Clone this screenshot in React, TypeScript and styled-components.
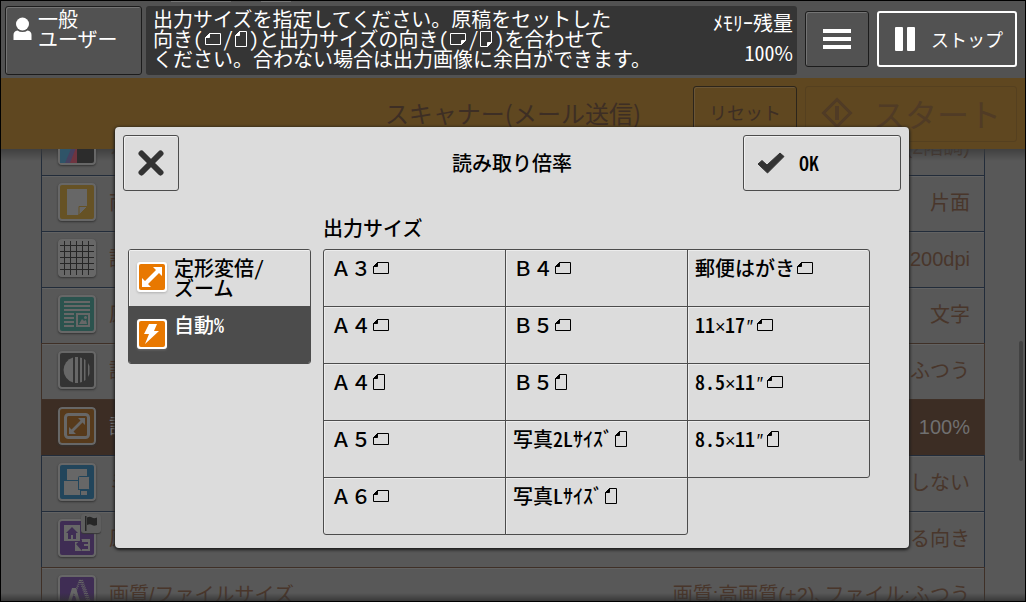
import React, { ReactNode } from "react";
import styled, { createGlobalStyle } from "styled-components";

const FONT = '"Noto Sans CJK JP", "Noto Sans", sans-serif';

const GlobalStyle = createGlobalStyle`
  *, *::before, *::after { box-sizing: border-box; }
  html, body, #root { height: 100%; }
  body { margin: 0; background: #000; font-family: ${FONT}; font-size: 20px; line-height: 20px; }
  button { font: inherit; color: inherit; margin: 0; padding: 0; background: none; border: 0; cursor: pointer; text-align: left; }
  h1, h2, h3, p, ul { margin: 0; padding: 0; font: inherit; list-style: none; }
  svg { display: block; flex: none; }
`;

/* ---------- screen frame ---------- */

const Screen = styled.div`
  position: relative;
  display: flex;
  flex-direction: column;
  height: 100vh;
  border: 1px solid #000;
  background: #585858;
  overflow: hidden;
`;

const TopBar = styled.header`
  display: flex;
  align-items: flex-start;
  padding: 4px 8px 4px 4px;
  flex: none;
  height: 77px;
  background:
    linear-gradient(#747474, #747474) 170px 0 / 60px 1px no-repeat border-box,
    linear-gradient(#747474, #747474) 260px 0 / 30px 1px no-repeat border-box,
    #525252;
  border-top: 1px solid transparent;
  color: #fff;
`;

const UserButton = styled.button`
  display: flex;
  gap: 6px;
  width: 137px;
  height: 69px;
  margin-right: 4px;
  padding: 2px 7px;
  border: 1px solid #1c1c1c;
  border-radius: 3px;
  box-shadow: inset 1px 1px 0 #747474;
  align-items: flex-start;
  svg { margin-top: 8px; }
`;

const MessagePanel = styled.section`
  display: flex;
  justify-content: space-between;
  flex: 1;
  min-width: 0;
  height: 69px;
  margin-right: 8px;
  padding: 3px 4px 4px 7px;
  border-radius: 3px;
  background: #353535;
`;

const Message = styled.p`
  white-space: nowrap;
`;

const Memory = styled.dl`
  margin: 0;
  padding-top: 4px;
  text-align: right;
  white-space: nowrap;
  dt, dd { margin: 0; }
  dd { margin-top: 10px; }
`;

const MenuButton = styled.button`
  display: flex;
  align-items: center;
  justify-content: center;
  width: 64px;
  height: 56px;
  margin: 5px 8px 0 0;
  border: 1px solid #1c1c1c;
  border-radius: 3px;
  box-shadow: inset 1px 1px 0 #747474;
`;

const StopButton = styled.button`
  display: flex;
  align-items: center;
  gap: 16px;
  width: 140px;
  height: 56px;
  margin-top: 5px;
  padding-left: 16px;
  border: 2px solid #fff;
  border-radius: 3px;
  font-size: 18px;
  white-space: nowrap;
`;

const FunctionBar = styled.div`
  display: grid;
  grid-template-columns: 1fr auto 1fr;
  align-items: center;
  flex: none;
  height: 71px;
  padding: 0 8px;
  background: #5f4720;
  color: #3d2e24;
`;

const FunctionTitle = styled.h1`
  grid-column: 2;
  padding-bottom: 2px;
  font-size: 24px;
  white-space: nowrap;
`;

const FunctionActions = styled.div`
  display: flex;
  justify-content: flex-end;
  gap: 8px;
`;

const ResetButton = styled.button`
  width: 104px;
  height: 56px;
  padding-bottom: 4px;
  border: 1px solid #2c251b;
  border-radius: 3px;
  box-shadow: inset 1px 1px 0 #6b5636;
  font-size: 18px;
  text-align: center;
`;

const StartButton = styled.button`
  display: flex;
  align-items: center;
  gap: 20px;
  width: 212px;
  height: 56px;
  padding: 0 0 2px 15px;
  border: 1px solid #55401f;
  border-radius: 3px;
  color: #503b25;
  font-size: 32px;
  white-space: nowrap;
`;

/* ---------- settings list ---------- */

const ListViewport = styled.main`
  position: relative;
  flex: 1;
  min-height: 0;
  padding: 0 40px;
  overflow: hidden;
  &::before, &::after {
    content: "";
    position: absolute;
    left: 0;
    right: 0;
  }
  &::before { top: 0; height: 12px; background: linear-gradient(#3a3a3acc, #58585800); }
  &::after { bottom: 0; height: 8px; background: linear-gradient(#58585800, #303030cc); }
`;

const SettingList = styled.ul`
  margin-top: -30px;
`;

const tones = {
  blue: "#222c3a",
  brown: "#3f3027",
};

const SettingRow = styled.button<{ $tone: keyof typeof tones; $active?: boolean }>`
  display: flex;
  align-items: center;
  width: 100%;
  height: 57px;
  margin-bottom: -1px;
  padding: 0 14px 1px 16px;
  border: 1px solid ${(p) => tones[p.$tone]};
  background: ${(p) => (p.$active ? "#3c2d24" : "#585858")};
  box-shadow: ${(p) => (p.$active ? "none" : "inset 0 1px 0 #626262")};
  color: ${(p) => (p.$active ? "#707070" : "#49362b")};
  font-family: "Liberation Sans", ${FONT};
  white-space: nowrap;
`;

const RowIcon = styled.span`
  position: relative;
  margin: 0 13px 2px 0;
  > svg:first-child { border-radius: 4px; box-shadow: 0 1px 2px #333; }
`;

const FlagBadge = styled.span`
  position: absolute;
  top: -5px;
  left: 23px;
  display: block;
  padding: 2px 3px;
  border-radius: 3px;
  background: #5e5e5e;
  box-shadow: 0 1px 1px #383838;
`;

const RowLabel = styled.span`
  flex: 1;
`;

const ScrollThumb = styled.div`
  position: absolute;
  top: 192px;
  right: 2px;
  width: 4px;
  height: 120px;
  border-radius: 2px;
  background: #424242;
`;

/* ---------- dialog ---------- */

const Overlay = styled.div`
  position: absolute;
  inset: 0;
  padding: 126px 116px 0 114px;
`;

const Dialog = styled.section`
  padding: 8px 8px 13px;
  border-radius: 4px;
  background: #dcdcdc;
  box-shadow: 0 1px 3px 1px #1c1c1c;
  color: #000;
  font-weight: 500;
`;

const DialogHeader = styled.div`
  display: grid;
  grid-template-columns: 1fr auto 1fr;
  align-items: center;
`;

const DialogButton = styled.button<{ $width: number }>`
  display: flex;
  align-items: center;
  justify-content: ${(p) => (p.$width > 60 ? "flex-start" : "center")};
  gap: 14px;
  width: ${(p) => p.$width}px;
  height: 56px;
  padding-left: ${(p) => (p.$width > 60 ? 13 : 0)}px;
  border: 1px solid #4c4c4c;
  border-radius: 3px;
  box-shadow: inset 1px 1px 0 #f0f0f0;
  &:last-child { justify-self: end; }
`;

const DialogBody = styled.div`
  display: flex;
  gap: 12px;
  padding: 27px 31px 0 5px;
`;

const ModeList = styled.div`
  width: 183px;
  height: 115px;
  flex: none;
  margin-top: 31px;
  border: 1px solid #4c4c4c;
  border-radius: 3px;
  overflow: hidden;
`;

const ModeButton = styled.button<{ $selected?: boolean }>`
  display: flex;
  align-items: flex-start;
  gap: 7px;
  width: 100%;
  height: 56px;
  padding: 8px;
  background: ${(p) => (p.$selected ? "#4c4c4c" : "#dcdcdc")};
  box-shadow: ${(p) => (p.$selected ? "none" : "inset 1px 1px 0 #f0f0f0")};
  color: ${(p) => (p.$selected ? "#fff" : "#000")};
  & + & { height: 57px; border-top: 1px solid #4c4c4c; }
  svg { margin-top: 4px; filter: drop-shadow(0 1px 1px #8888); }
`;

const SizeSection = styled.div`
  flex: 1;
  min-width: 0;
`;

const SizeColumns = styled.div`
  display: flex;
  align-items: flex-start;
  margin-top: 11px;
`;

const SizeColumn = styled.ul`
  flex: 1;
  min-width: 0;
  & + & { margin-left: -1px; }
  &:first-child li:first-child button { border-top-left-radius: 3px; }
  &:first-child li:last-child button { border-bottom-left-radius: 3px; }
  &:last-child li:first-child button { border-top-right-radius: 3px; }
  & + & li:last-child button { border-bottom-right-radius: 3px; }
  li + li { margin-top: -1px; }
`;

const SizeButton = styled.button`
  display: flex;
  align-items: flex-start;
  width: 100%;
  height: 58px;
  padding: 8px 7px;
  border: 1px solid #4c4c4c;
  box-shadow: inset 1px 1px 0 #ececec;
  white-space: nowrap;
  svg { margin-top: 1px; }
`;

/* Latin text in half-width (half an em) forms */
const Half = styled.span`
  font-feature-settings: "hwid";
`;

const Narrow = styled.span`
  display: inline-block;
  width: 10px;
  font-family: "Liberation Sans", ${FONT};
  font-size: 18px;
  font-weight: 400;
  text-align: center;
`;

const PaperSvg = styled.svg`
  display: inline-block;
  vertical-align: -1px;
`;

type PaperKind = "landscape" | "portrait";

function Paper({ kind, fold = "tl" }: { kind: PaperKind; fold?: "tl" | "br" }) {
  const land = kind === "landscape";
  const w = land ? 15 : 11;
  const h = land ? 11 : 15;
  return (
    <PaperSvg width={w + 5} height="18" viewBox={`0 0 ${w + 5} 18`} fill="none" stroke="currentColor" aria-hidden>
      <g transform={`translate(2.5 ${land ? 3.5 : 1.5})`}>
        {fold === "tl" ? (
          <>
            <path d={`M4 0H${w}V${h}H0V4Z`} />
            <path d="M4 0V4H0Z" fill="currentColor" />
          </>
        ) : (
          <>
            <path d={`M0 0H${w}V${h - 4}L${w - 4} ${h}H0Z`} />
            <path d={`M${w} ${h - 4}H${w - 4}V${h}Z`} fill="currentColor" />
          </>
        )}
      </g>
    </PaperSvg>
  );
}

/* ---------- row icons ---------- */

const G = "#676767";

function Tile({ fill, children }: { fill: string; children?: ReactNode }) {
  return (
    <svg width="38" height="38" viewBox="0 0 38 38" aria-hidden>
      <rect width="38" height="38" rx="4" fill={G} />
      <rect x="2" y="2" width="34" height="34" rx="2" fill={fill} />
      {children}
    </svg>
  );
}

const icons = {
  color: (
    <Tile fill="#2c2c2c">
      <path d="M2 2h17v34H2z" fill="#2f5468" />
      <path d="M19 8v28H7z" fill="#46405f" />
      <path d="M19 18v18h-7z" fill="#6e3440" />
    </Tile>
  ),
  sides: (
    <Tile fill="#665225">
      <path d="M9 6h20v17l-9 9H9z" fill={G} />
      <path d="M21 32v-8.500h8.500z" fill={G} stroke="#665225" />
    </Tile>
  ),
  grid: (
    <Tile fill={G}>
      <path d="M6.500 2v34M12.500 2v34M18.500 2v34M24.500 2v34M30.500 2v34M2 6.500h34M2 12.500h34M2 18.500h34M2 24.500h34M2 30.500h34" stroke="#262626" />
    </Tile>
  ),
  document: (
    <Tile fill="#2b534e">
      <path d="M6 7h26M6 11h26M6 15h26M6 19h10M6 23h10M6 27h10M6 31h10" stroke={G} strokeWidth="2" />
      <rect x="19" y="19" width="12" height="12" fill="none" stroke={G} strokeWidth="2" />
      <path d="M21 29l3-5 2 2 2-1 1 4z" fill={G} />
      <circle cx="27.500" cy="22.500" r="1.500" fill={G} />
    </Tile>
  ),
  density: (
    <Tile fill="#333">
      <path d="M15 6.500a13 13 0 0 0 0 25z" fill={G} />
      <path d="M17 6h3v26h-3zM22 6.500l2 .5v24l-2 .5zM26 8l1.500 1v20L26 30zM30 12l1.500 3v8L30 26z" fill={G} />
    </Tile>
  ),
  zoom: (
    <Tile fill="#573a1b">
      <rect x="7.500" y="7.500" width="23" height="23" rx="3" fill="none" stroke={G} strokeWidth="3" />
      <path d="M20 11h7v7l-2.500-2.500-9 9L18 27h-7v-7l2.500 2.500 9-9z" fill={G} />
    </Tile>
  ),
  mixed: (
    <Tile fill="#22455b">
      <path d="M9 6h20v11H9zM6 18h14v9h2v5H6z" fill={G} />
      <rect x="20.500" y="13.500" width="11" height="13" rx="1" fill={G} stroke="#22455b" />
      <rect x="23" y="28" width="6" height="4" fill={G} />
    </Tile>
  ),
  orientation: (
    <Tile fill="#3f2d54">
      <path d="M6 6h16v16H6z" fill={G} />
      <path d="M14 8l6 6h-2v6h-3v-4h-2v4h-3v-6H8z" fill="#3f2d54" />
      <path d="M17 32V23h6v-3h9v12z" fill={G} />
      <path d="M18 25l6-5v3h6v2h-4v2h4v3h-6v2z" fill="#3f2d54" />
    </Tile>
  ),
  quality: (
    <Tile fill="#3f2d54">
      <path d="M22 5l-6 16M22 5l9 25M24 5l9 25" stroke={G} strokeWidth="2" strokeDasharray="1 1" />
      <path d="M7 36l7-23h4l7 23h-4l-1-5h-8l-1 5zM13 27h6l-3-9z" fill={G} fillRule="evenodd" />
    </Tile>
  ),
};

type Setting = {
  icon: keyof typeof icons;
  label: string;
  value: string;
  tone: keyof typeof tones;
  active?: boolean;
  flagged?: boolean;
};

const settings: Setting[] = [
  { icon: "color", label: "カラーモード", value: "白黒(2階調)", tone: "blue" },
  { icon: "sides", label: "両面原稿送り", value: "片面", tone: "blue" },
  { icon: "grid", label: "読み取り解像度", value: "200dpi", tone: "blue" },
  { icon: "document", label: "原稿の画質", value: "文字", tone: "blue" },
  { icon: "density", label: "読み取り濃度", value: "濃度:ふつう", tone: "brown" },
  { icon: "zoom", label: "読み取り倍率", value: "100%", tone: "brown", active: true },
  { icon: "mixed", label: "ミックスサイズ原稿送り", value: "しない", tone: "blue" },
  { icon: "orientation", label: "原稿セット向き", value: "読める向き", tone: "blue", flagged: true },
  { icon: "quality", label: "画質/ファイルサイズ", value: "画質:高画質(+2)､ファイル:ふつう", tone: "brown" },
];

/* ---------- output sizes ---------- */

const inches = (size: string) => {
  const [a, b] = size.split("×");
  return (
    <>
      <Half>{a}</Half>
      <Narrow>×</Narrow>
      <Half>{b}</Half>
      <Narrow>″</Narrow>
    </>
  );
};

const sizeColumns: { key: string; name: ReactNode; kind: PaperKind }[][] = [
  [
    { key: "a3", name: "Ａ３", kind: "landscape" },
    { key: "a4", name: "Ａ４", kind: "landscape" },
    { key: "a4r", name: "Ａ４", kind: "portrait" },
    { key: "a5", name: "Ａ５", kind: "landscape" },
    { key: "a6", name: "Ａ６", kind: "landscape" },
  ],
  [
    { key: "b4", name: "Ｂ４", kind: "landscape" },
    { key: "b5", name: "Ｂ５", kind: "landscape" },
    { key: "b5r", name: "Ｂ５", kind: "portrait" },
    { key: "2l", name: <>写真<Half>2L</Half>ｻｲｽﾞ</>, kind: "portrait" },
    { key: "l", name: <>写真<Half>L</Half>ｻｲｽﾞ</>, kind: "portrait" },
  ],
  [
    { key: "hagaki", name: "郵便はがき", kind: "landscape" },
    { key: "11x17", name: inches("11×17"), kind: "landscape" },
    { key: "8x11", name: inches("8.5×11"), kind: "landscape" },
    { key: "8x11r", name: inches("8.5×11"), kind: "portrait" },
  ],
];

export default function App() {
  return (
    <>
      <GlobalStyle />
      <Screen>
        <TopBar>
          <UserButton>
            <svg width="19" height="24" viewBox="0 0 19 24" fill="#fff" aria-hidden>
              <circle cx="9.500" cy="7" r="6.500" />
              <path d="M.5 23v-5q0-4 4-4.500 2 1.500 5 1.500t5-1.500q4 .5 4 4.500v5z" />
            </svg>
            <span>
              一般
              <br />
              ユーザー
            </span>
          </UserButton>
          <MessagePanel>
            <Message>
              出力サイズを指定してください。原稿をセットした
              <br />
              向き<Half>(</Half>
              <Paper kind="landscape" />
              <Half>/</Half>
              <Paper kind="portrait" />
              <Half>)</Half>と出力サイズの向き<Half>(</Half>
              <Paper kind="landscape" fold="br" />
              <Half>/</Half>
              <Paper kind="portrait" fold="br" />
              <Half>)</Half>を合わせて
              <br />
              ください。合わない場合は出力画像に余白ができます。
            </Message>
            <Memory>
              <dt>ﾒﾓﾘｰ残量</dt>
              <dd>
                <Half>100</Half>%
              </dd>
            </Memory>
          </MessagePanel>
          <MenuButton aria-label="メニュー">
            <svg width="28" height="20" viewBox="0 0 28 20" fill="#fff" aria-hidden>
              <path d="M0 0h28v4H0zM0 8h28v4H0zM0 16h28v4H0z" />
            </svg>
          </MenuButton>
          <StopButton>
            <svg width="20" height="24" viewBox="0 0 20 24" fill="#fff" aria-hidden>
              <rect width="8" height="24" rx="1" />
              <rect x="12" width="8" height="24" rx="1" />
            </svg>
            ストップ
          </StopButton>
        </TopBar>

        <FunctionBar>
          <FunctionTitle>スキャナー(メール送信)</FunctionTitle>
          <FunctionActions>
            <ResetButton>リセット</ResetButton>
            <StartButton>
              <svg width="32" height="32" viewBox="0 0 32 32" fill="none" stroke="currentColor" strokeWidth="3" aria-hidden>
                <path d="M16 2.500L29.500 16 16 29.500 2.500 16z" />
                <path d="M16 9v14" strokeWidth="4" />
              </svg>
              スタート
            </StartButton>
          </FunctionActions>
        </FunctionBar>

        <ListViewport>
          <SettingList>
            {settings.map((s) => (
              <li key={s.icon}>
                <SettingRow $tone={s.tone} $active={s.active}>
                  <RowIcon>
                    {icons[s.icon]}
                    {s.flagged && (
                      <FlagBadge>
                        <svg width="14" height="15" viewBox="0 0 14 15" fill="#262626" aria-hidden>
                          <path d="M1 0h1.500v15H1zM3 1.500q3-1.500 5 0t5 0V9q-3 1.500-5 0T3 9z" />
                        </svg>
                      </FlagBadge>
                    )}
                  </RowIcon>
                  <RowLabel>{s.label}</RowLabel>
                  <span>{s.value}</span>
                </SettingRow>
              </li>
            ))}
          </SettingList>
          <ScrollThumb />
        </ListViewport>

        <Overlay>
          <Dialog role="dialog" aria-labelledby="dialog-title">
            <DialogHeader>
              <DialogButton $width={56} aria-label="閉じる">
                <svg width="26" height="26" viewBox="0 0 26 26" stroke="#333" strokeWidth="6" strokeLinecap="round" aria-hidden>
                  <path d="M3.500 3.500l19 19M22.500 3.500l-19 19" />
                </svg>
              </DialogButton>
              <h2 id="dialog-title">読み取り倍率</h2>
              <DialogButton $width={158}>
                <svg width="28" height="22" viewBox="0 0 28 22" aria-hidden>
                  <path d="M1 12l4-3.500 5 4.500L23 1l4 3.500L10.500 21z" fill="#333" stroke="#333" strokeLinejoin="round" />
                </svg>
                <Half>OK</Half>
              </DialogButton>
            </DialogHeader>
            <DialogBody>
              <ModeList>
                <ModeButton>
                  <svg width="30" height="30" viewBox="0 0 30 30" aria-hidden>
                    <rect width="30" height="30" rx="3" fill="#fff" />
                    <rect x="2" y="2" width="26" height="26" rx="2" fill="#e87800" />
                    <path d="M16 5h9v9l-3-3-11 11 3 3H5v-9l3 3L19 8z" fill="#fff" />
                  </svg>
                  <span>
                    定形変倍<Half>/</Half>
                    <br />
                    ズーム
                  </span>
                </ModeButton>
                <ModeButton $selected>
                  <svg width="30" height="30" viewBox="0 0 30 30" aria-hidden>
                    <rect width="30" height="30" rx="3" fill="#fff" />
                    <rect x="2" y="2" width="26" height="26" rx="2" fill="#e87800" />
                    <path d="M12 5h8l-3 7h5L8 25l4-10H7z" fill="#fff" />
                  </svg>
                  <span>
                    自動<Half>%</Half>
                  </span>
                </ModeButton>
              </ModeList>
              <SizeSection>
                <h3>出力サイズ</h3>
                <SizeColumns>
                  {sizeColumns.map((column, i) => (
                    <SizeColumn key={i}>
                      {column.map((size) => (
                        <li key={size.key}>
                          <SizeButton>
                            <span>{size.name}</span>
                            <Paper kind={size.kind} />
                          </SizeButton>
                        </li>
                      ))}
                    </SizeColumn>
                  ))}
                </SizeColumns>
              </SizeSection>
            </DialogBody>
          </Dialog>
        </Overlay>
      </Screen>
    </>
  );
}
